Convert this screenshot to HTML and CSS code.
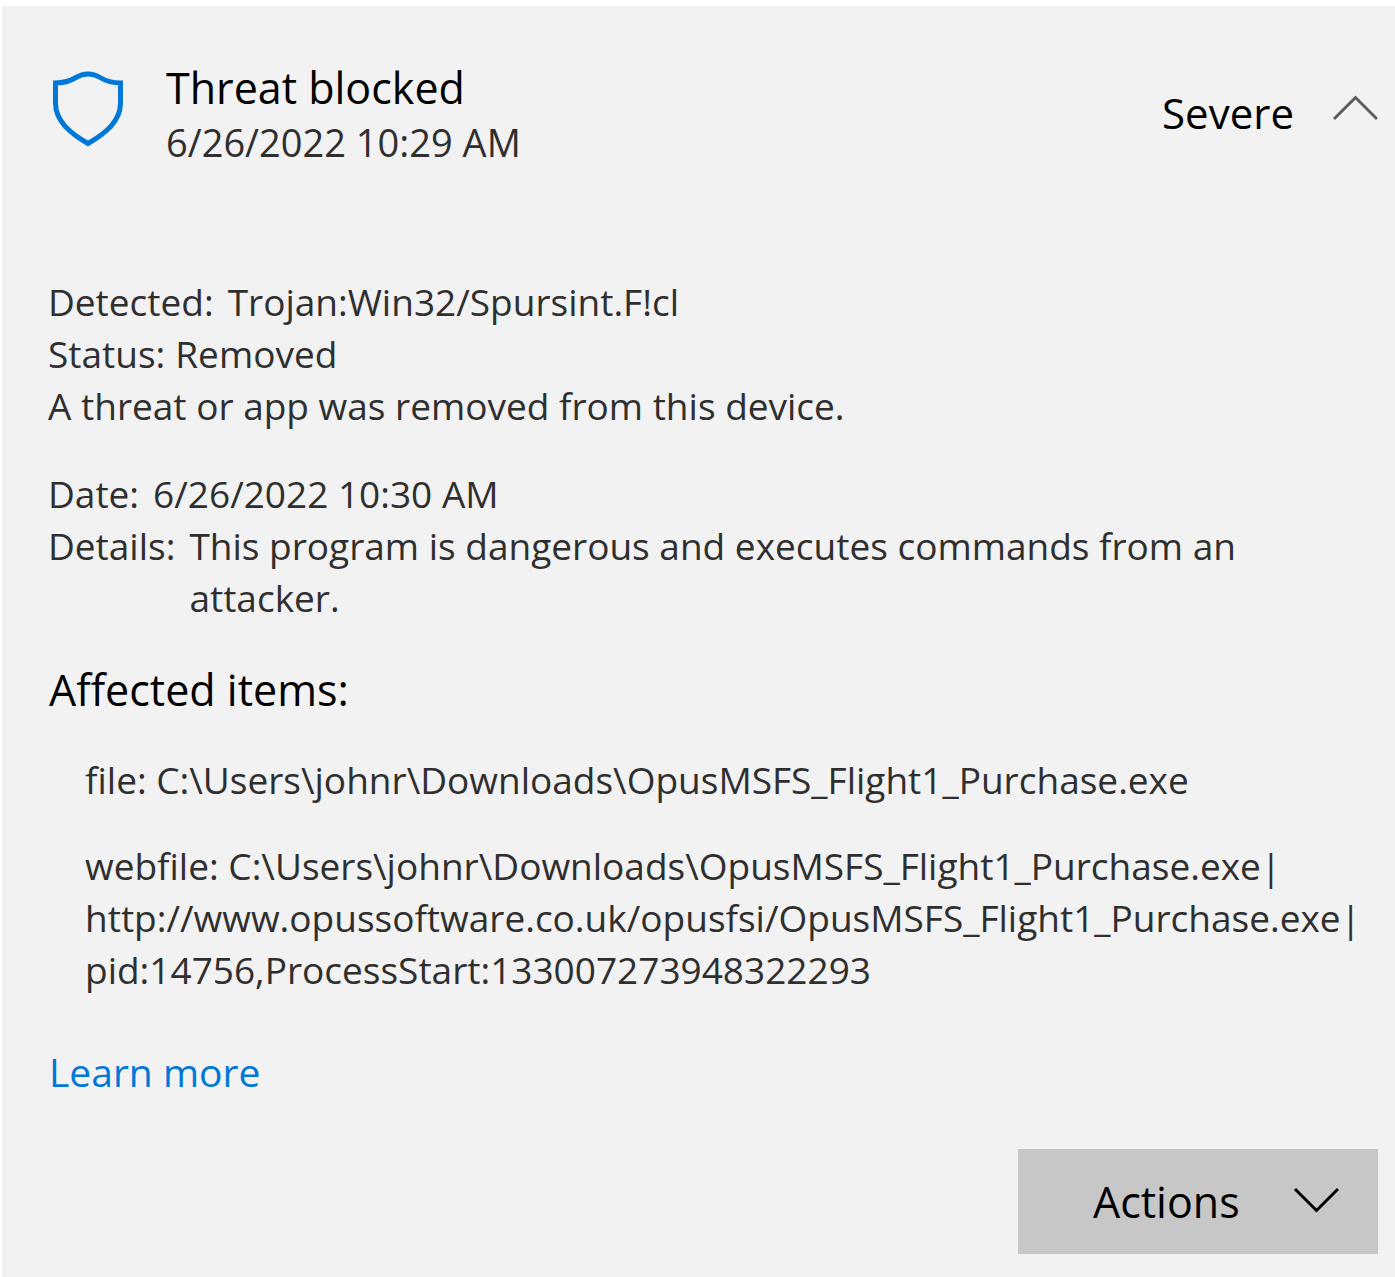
FILE: index.html
```html
<!DOCTYPE html>
<html lang="en">
<head>
<meta charset="utf-8">
<meta name="viewport" content="width=device-width, initial-scale=1">
<title>Protection history</title>
<link rel="stylesheet" href="styles.css">
</head>
<body>
<main class="card">
  <header class="summary">
    <svg class="shield" viewBox="0 0 72 76" aria-hidden="true"><path d="M3.500 12C13 12 19 9.500 24 6.500C28 4 31 3 36 3C41 3 44 4 48 6.500C53 9.500 59 12 68.500 12V32C68.500 50 54 62 36 72.500C18 62 3.500 50 3.500 32Z"/></svg>
    <div class="heading">
      <h1 class="title">Threat blocked</h1>
      <p class="time">6/26/2022 10:29 AM</p>
    </div>
    <span class="severity">Severe</span>
    <button class="toggle" type="button" aria-label="Collapse"><svg class="chevron" viewBox="0 0 46 26" aria-hidden="true"><path d="M2 24L23.500 2.500L45 24"/></svg></button>
  </header>
  <section class="facts">
    <dl class="group">
      <div class="row wide"><dt>Detected:</dt><dd>Trojan:Win32/Spursint.F!cl</dd></div>
      <div class="row"><dt>Status:</dt><dd>Removed</dd></div>
    </dl>
    <p class="note">A threat or app was removed from this device.</p>
    <dl class="group later">
      <div class="row wide"><dt>Date:</dt><dd>6/26/2022 10:30 AM</dd></div>
      <div class="row wide"><dt>Details:</dt><dd>This program is dangerous and executes commands from an attacker.</dd></div>
    </dl>
  </section>
  <section class="affected">
    <h2 class="subtitle">Affected items:</h2>
    <ul class="items">
      <li>file: C:\Users\johnr\Downloads\OpusMSFS_Flight1_Purchase.exe</li>
      <li>webfile: C:\Users\johnr\Downloads\OpusMSFS_Flight1_Purchase.exe|<br>http://www.opussoftware.co.uk/opusfsi/OpusMSFS_Flight1_Purchase.exe|<br>pid:14756,ProcessStart:133007273948322293</li>
    </ul>
  </section>
  <a class="learn" href="#">Learn more</a>
  <button class="actions" type="button">Actions<svg class="chevron" viewBox="0 0 46 26" aria-hidden="true"><path d="M2 2L23.500 23.500L45 2"/></svg></button>
</main>
</body>
</html>
```
FILE: styles.css
```css
* { box-sizing: border-box; }
body {
  margin: 0;
  padding: 6px 0 0 2px;
  background: #fff;
  color: #2f2f2f;
  font: 37px/52px "Segoe UI", "Open Sans", "Noto Sans", sans-serif;
}
h1, h2, p, dl, dd, ul { margin: 0; padding: 0; }
.card {
  display: flex;
  flex-direction: column;
  min-height: calc(100vh - 6px);
  padding: 54px 17px 23px 46px;
  background: #f2f2f2;
}
.summary { display: flex; align-items: center; }
.shield { width: 80px; height: 76px; margin-bottom: 10px; fill: none; stroke: #0078d7; stroke-width: 5; }
.heading { flex: 1; margin-left: 38px; }
.title, .subtitle { color: #000; font-size: 43px; font-weight: 400; line-height: 56px; }
.time { font-size: 38px; }
.severity { margin-bottom: 2px; color: #000; font-size: 42px; }
.toggle { display: flex; margin: 0 0 12px 38px; padding: 0; border: 0; background: none; color: #5c5c5c; }
.chevron { width: 46px; height: 26px; fill: none; stroke: currentColor; stroke-width: 3; }
.facts { margin-top: 108px; }
.row { display: flex; gap: 10px; }
.row.wide { gap: 14px; }
.later { margin-top: 36px; }
.affected { margin-top: 38px; padding-left: 1px; }
.items { margin-top: 36px; padding-left: 36px; list-style: none; }
.items li + li { margin-top: 34px; }
.learn { align-self: flex-start; margin-top: 50px; padding-left: 1px; color: #0078d7; font-size: 39px; text-decoration: none; }
.actions {
  display: flex;
  align-items: center;
  justify-content: space-between;
  align-self: flex-end;
  width: 360px;
  height: 105px;
  margin-top: auto;
  padding: 1px 39px 0 75px;
  border: 0;
  background: #c7c7c7;
  color: #000;
  font: inherit;
  font-size: 43px;
}
.actions .chevron { margin-bottom: 4px; }
```
